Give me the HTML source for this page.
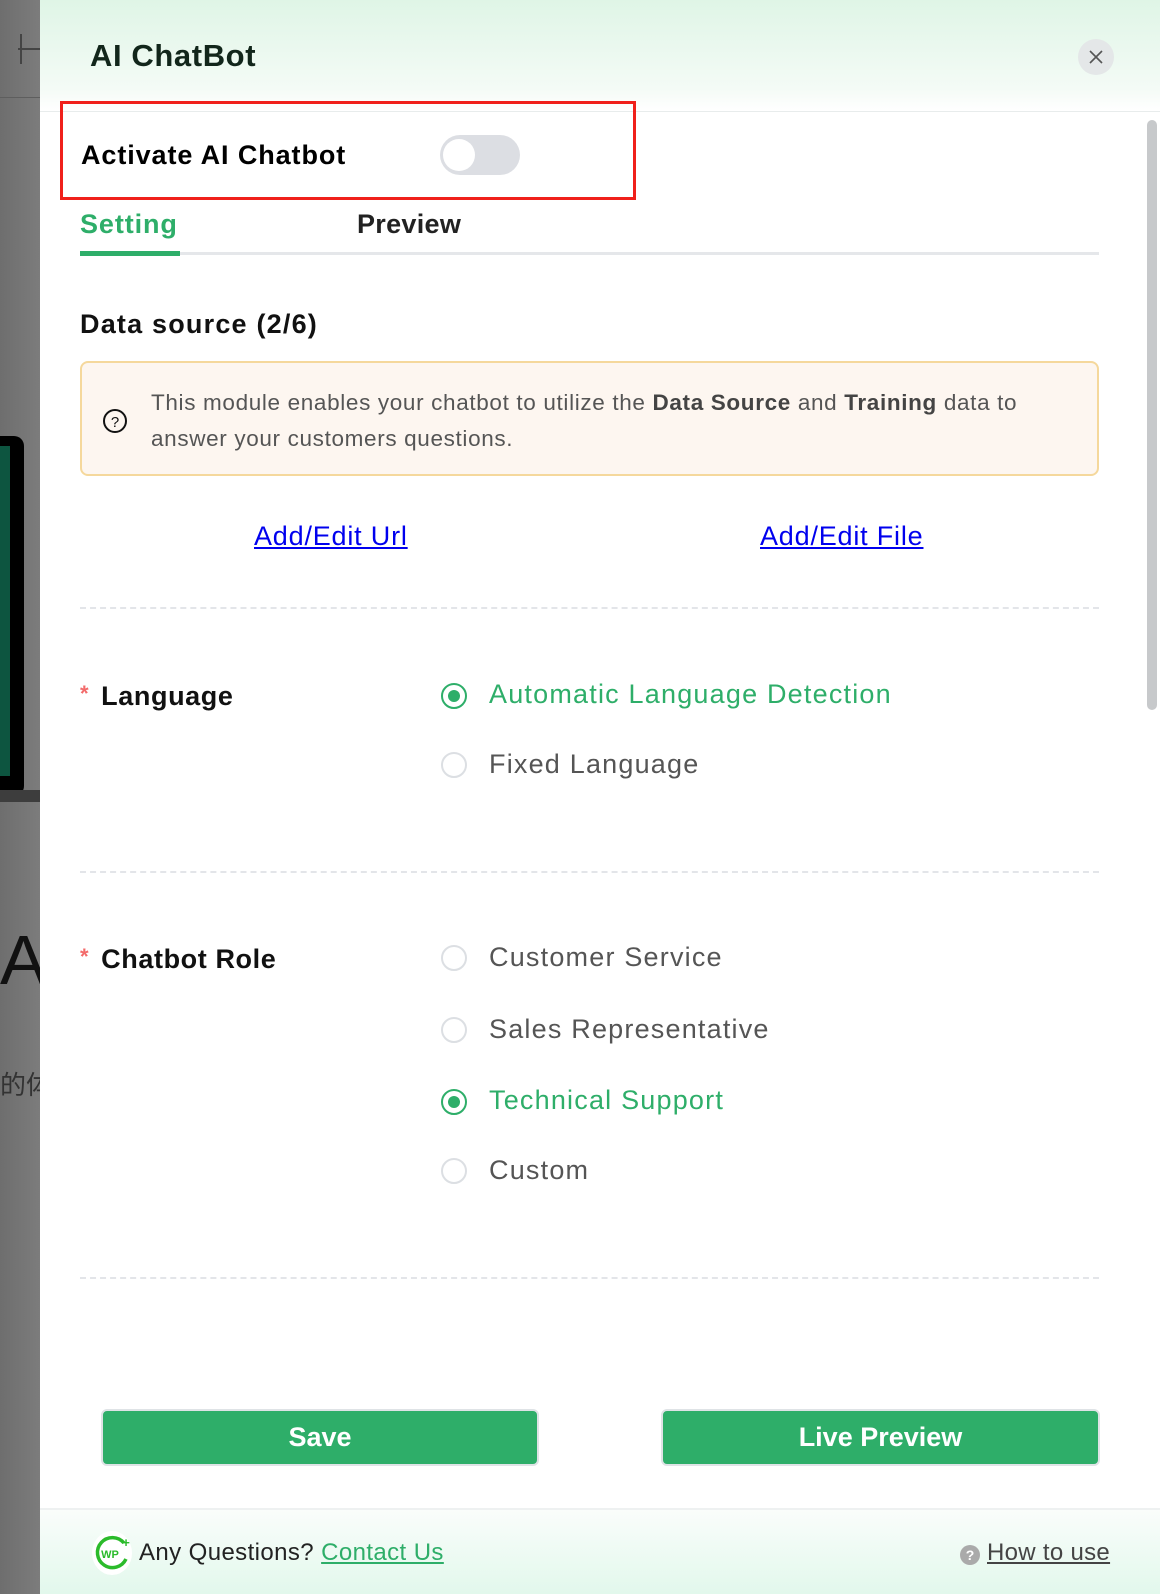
<!DOCTYPE html>
<html><head><meta charset="utf-8"><style>
*{box-sizing:border-box;margin:0;padding:0}
body{width:1160px;height:1594px;overflow:hidden;font-family:"Liberation Sans","Noto Sans CJK SC",sans-serif;position:relative;background:#777}
.bg{position:absolute;left:0;top:0;width:40px;height:1594px;background:linear-gradient(90deg,#6e6e6e,#7c7c7c)}
.panel{position:absolute;left:40px;top:0;width:1120px;height:1594px;background:#fff}
.abs{position:absolute}
.hdr{left:0;top:0;width:1120px;height:112px;background:linear-gradient(180deg,#dff5e6,#f4fbf6 80%,#fff);border-bottom:1px solid #e8ecec}
.b{font-weight:bold}
.radio{position:absolute;width:26px;height:26px;border-radius:50%;border:2px solid #dcdfe3;background:#fff}
.radio.on{border-color:#2eae69}
.radio.on:after{content:"";position:absolute;left:5px;top:5px;width:12px;height:12px;border-radius:50%;background:#2eae69}
.opt{position:absolute;font-size:27px;color:#555;letter-spacing:1.2px}
.opt.g{color:#2eae69}
.dash{position:absolute;left:40px;width:1019px;border-top:2px dashed #e3e5e9}
.btn{position:absolute;top:1409px;height:57px;background:#2eae69;border:2px solid #dfe3e6;border-radius:6px;color:#fff;font-size:27px;font-weight:bold;text-align:center;line-height:53px}
.lbl{position:absolute;left:40px;font-size:27px;font-weight:bold;color:#111;letter-spacing:0.6px}
.lbl span{color:#f36b6b;font-size:22px;vertical-align:top;margin-right:12px}
</style></head><body>
<div class="bg"></div>
<div class="abs" style="left:0;top:97px;width:40px;height:1px;background:#5e5e5e"></div>
<div class="abs" style="left:20px;top:34px;width:20px;height:30px;border-left:2px solid #444"></div>
<div class="abs" style="left:18px;top:48px;width:22px;height:2px;background:#444"></div>
<div class="abs" style="left:-10px;top:436px;width:34px;height:360px;background:#000;border-radius:10px"></div>
<div class="abs" style="left:-10px;top:446px;width:20px;height:330px;background:#0d5540"></div>
<div class="abs" style="left:0;top:790px;width:40px;height:12px;background:#3d3d3d"></div>
<div class="abs" style="left:0;top:925px;font-size:70px;color:#111;line-height:1">A</div>
<div class="abs" style="left:0;top:1072px;font-size:26px;color:#333;line-height:1">的体</div>
<div class="panel">
 <div class="abs hdr"></div>
 <div class="abs b" style="left:50px;top:38px;font-size:31px;color:#12261b;letter-spacing:0.6px">AI ChatBot</div>
 <div class="abs" style="left:1038px;top:39px;width:36px;height:36px;border-radius:50%;background:#e4e7e8"></div>
 <svg class="abs" style="left:1048px;top:49px" width="16" height="16" viewBox="0 0 16 16"><path d="M2 2L14 14M14 2L2 14" stroke="#555" stroke-width="1.6"/></svg>
 <div class="abs" style="left:1107px;top:120px;width:10px;height:590px;background:#c7c9cb;border-radius:5px"></div>
 <div class="abs" style="left:20px;top:101px;width:576px;height:99px;border:3px solid #f0201b"></div>
 <div class="abs b" style="left:41px;top:140px;font-size:27px;color:#000;letter-spacing:0.9px">Activate AI Chatbot</div>
 <div class="abs" style="left:400px;top:135px;width:80px;height:40px;border-radius:20px;background:#dcdee3"></div>
 <div class="abs" style="left:403px;top:139px;width:32px;height:32px;border-radius:50%;background:#fff"></div>
 <div class="abs b" style="left:40px;top:209px;font-size:27px;color:#2eae69;letter-spacing:0.9px">Setting</div>
 <div class="abs b" style="left:317px;top:209px;font-size:27px;color:#222;letter-spacing:0.3px">Preview</div>
 <div class="abs" style="left:40px;top:252px;width:1019px;height:3px;background:#e5e7ea"></div>
 <div class="abs" style="left:40px;top:251px;width:100px;height:5px;background:#2eae69"></div>
 <div class="abs b" style="left:40px;top:309px;font-size:27px;color:#111;letter-spacing:1.2px">Data source (2/6)</div>
 <div class="abs" style="left:40px;top:361px;width:1019px;height:115px;background:#fdf6f0;border:2px solid #f5d89c;border-radius:8px"></div>
 <svg class="abs" style="left:62px;top:408px" width="26" height="26" viewBox="0 0 26 26"><circle cx="13" cy="13" r="11" fill="none" stroke="#111" stroke-width="2"/><text x="13" y="19" font-size="15" text-anchor="middle" font-family="Liberation Sans" fill="#111">?</text></svg>
 <div class="abs" style="left:111px;top:385px;width:935px;font-size:22.5px;line-height:36px;color:#555;letter-spacing:0.65px">This module enables your chatbot to utilize the <b style="color:#444">Data Source</b> and <b style="color:#444">Training</b> data to answer your customers questions.</div>
 <div class="abs" style="left:214px;top:521px;font-size:27px;color:#00e;text-decoration:underline;letter-spacing:0.8px">Add/Edit Url</div>
 <div class="abs" style="left:720px;top:521px;font-size:27px;color:#00e;text-decoration:underline;letter-spacing:0.8px">Add/Edit File</div>
 <div class="dash" style="top:607px"></div>
 <div class="lbl" style="top:681px"><span>*</span>Language</div>
 <div class="radio on" style="left:401px;top:683px"></div><div class="opt g" style="left:449px;top:679px">Automatic Language Detection</div>
 <div class="radio" style="left:401px;top:752px"></div><div class="opt" style="left:449px;top:749px">Fixed Language</div>
 <div class="dash" style="top:871px"></div>
 <div class="lbl" style="top:944px"><span>*</span>Chatbot Role</div>
 <div class="radio" style="left:401px;top:945px"></div><div class="opt" style="left:449px;top:942px">Customer Service</div>
 <div class="radio" style="left:401px;top:1017px"></div><div class="opt" style="left:449px;top:1014px">Sales Representative</div>
 <div class="radio on" style="left:401px;top:1089px"></div><div class="opt g" style="left:449px;top:1085px">Technical Support</div>
 <div class="radio" style="left:401px;top:1158px"></div><div class="opt" style="left:449px;top:1155px">Custom</div>
 <div class="dash" style="top:1277px"></div>
 <div class="btn" style="left:61px;width:438px">Save</div>
 <div class="btn" style="left:621px;width:439px">Live Preview</div>
 <div class="abs" style="left:0;top:1508px;width:1120px;height:86px;background:linear-gradient(180deg,#fafdfb,#e2f8ec);border-top:2px solid #eef1f1"></div>
 <div class="abs" style="left:52px;top:1531px;width:40px;height:44px;border-radius:50%;background:#fff"></div>
 <svg class="abs" style="left:54px;top:1535px" width="40" height="36" viewBox="0 0 40 36"><path d="M30 8A15 15 0 1 0 32 24" fill="none" stroke="#2bbb2b" stroke-width="3.5"/><text x="16" y="23" font-size="11" font-weight="bold" text-anchor="middle" font-family="Liberation Sans" fill="#2bbb2b">WP</text><text x="32" y="12" font-size="13" font-weight="bold" text-anchor="middle" font-family="Liberation Sans" fill="#2bbb2b">+</text></svg>
 <div class="abs" style="left:99px;top:1539px;font-size:24px;color:#222;letter-spacing:0.4px">Any Questions? <span style="color:#2eae69;text-decoration:underline">Contact Us</span></div>
 <div class="abs" style="left:920px;top:1545px;width:20px;height:20px;border-radius:50%;background:#aaa;color:#fff;font-size:14px;font-weight:bold;text-align:center;line-height:20px">?</div>
 <div class="abs" style="left:947px;top:1539px;font-size:24px;color:#444;text-decoration:underline;letter-spacing:0.3px">How to use</div>
</div>
</body></html>
